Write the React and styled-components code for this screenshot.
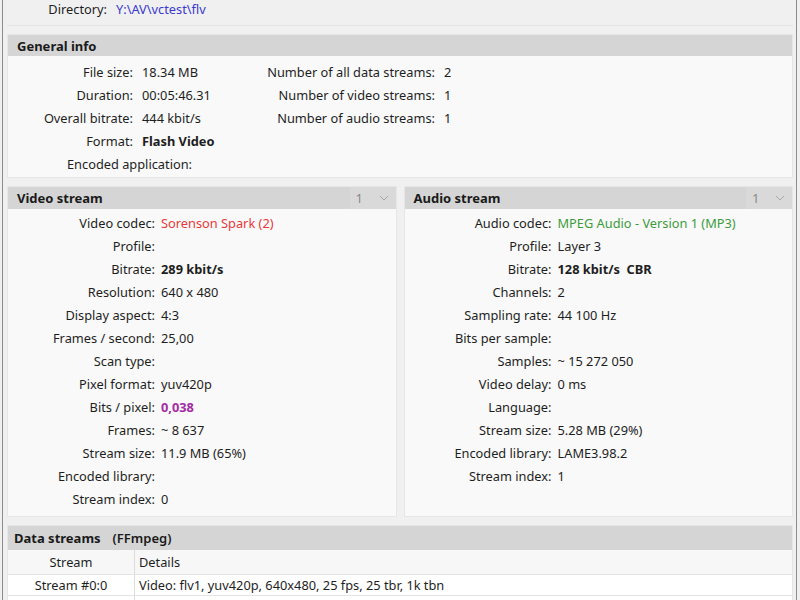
import React from "react";
import styled, { createGlobalStyle } from "styled-components";

const GlobalStyle = createGlobalStyle`
  html, body {
    margin: 0;
    padding: 0;
  }
  body {
    font-family: "Noto Sans", "Open Sans", sans-serif;
    font-size: 12.8px;
    color: #1e1e1e;
  }
`;

const Screen = styled.div`
  width: 800px;
  height: 600px;
  overflow: hidden;
  background: #f0f0f0;
`;

const Frame = styled.div`
  margin: 0 3px 0 2px;
  height: 600px;
  border-left: 1px solid #8c8c8c;
  border-right: 1px solid #8c8c8c;
  padding: 0 3px 0 4px;
  display: flex;
  flex-direction: column;
  gap: 8px;
`;

const DirRow = styled.div`
  display: grid;
  grid-template-columns: 100px 1fr;
  column-gap: 9px;
  height: 25px;
  line-height: 18px;
  border-bottom: 1px solid #e4e4e4;
`;

const Label = styled.span`
  text-align: right;
  white-space: nowrap;
`;

const WideLabel = styled.span`
  grid-column: 1 / 3;
  padding-left: 59px;
  white-space: nowrap;
`;

const Value = styled.span`
  white-space: pre;
  color: ${(p) => p.$color || "#1e1e1e"};
  font-weight: ${(p) => (p.$bold ? 700 : 400)};
`;

const Panel = styled.section`
  background: #f9f9f9;
  border: 1px solid #e6e6e6;
  display: flex;
  flex-direction: column;
  flex: ${(p) => (p.$grow ? 1 : "none")};
  min-height: 0;
`;

const PanelHeader = styled.header`
  height: ${(p) => p.$h || "21px"};
  flex: none;
  background: #d5d5d5;
  display: flex;
  align-items: center;
  padding-left: ${(p) => p.$indent || "9px"};
  font-weight: 700;
  font-size: 13px;
  color: #1a1a1a;
`;

const HeaderTitle = styled.span`
  flex: 1;
`;

const HeaderNote = styled.span`
  margin-left: 12px;
  font-weight: 600;
`;

const Combo = styled.div`
  width: 46px;
  height: 100%;
  background: #d9d9d9;
  display: flex;
  align-items: center;
  justify-content: space-between;
  padding: 0 7px 0 6px;
  box-sizing: border-box;
  font-weight: 400;
  color: #8a8a8a;
`;

const InfoGrid = styled.div`
  display: grid;
  grid-template-columns: ${(p) => p.$cols};
  column-gap: ${(p) => p.$gap || "6px"};
  grid-auto-rows: 23px;
  align-items: center;
  padding: ${(p) => p.$pad || "3px 0"};
`;

const StreamRow = styled.div`
  display: flex;
  gap: 7px;
  height: 331px;
  flex: none;
`;

const Table = styled.div`
  display: grid;
  grid-template-columns: 126px 1fr;
  grid-template-rows: 25px 21px 21px;
  background: #f7f7f7;
`;

const Cell = styled.div`
  display: flex;
  align-items: center;
  padding-left: ${(p) => (p.$center ? "0" : "4px")};
  justify-content: ${(p) => (p.$center ? "center" : "flex-start")};
  border-left: ${(p) => (p.$first ? "none" : "1px solid #dcdcdc")};
  background: ${(p) => (p.$body ? "#ffffff" : "transparent")};
  border-bottom: 1px solid #e4e4e4;
  white-space: nowrap;
`;

const Chevron = () => (
  <svg width="10" height="6" viewBox="0 0 10 6">
    <path d="M1 1 L5 5 L9 1" fill="none" stroke="#a8a8a8" strokeWidth="1" />
  </svg>
);

const general = [
  ["File size:", "18.34 MB", "Number of all data streams:", "2"],
  ["Duration:", "00:05:46.31", "Number of video streams:", "1"],
  ["Overall bitrate:", "444 kbit/s", "Number of audio streams:", "1"],
  ["Format:", { text: "Flash Video", bold: true }, "", ""],
];

const video = [
  ["Video codec:", { text: "Sorenson Spark (2)", color: "#e8393a" }],
  ["Profile:", ""],
  ["Bitrate:", { text: "289 kbit/s", bold: true }],
  ["Resolution:", "640 x 480"],
  ["Display aspect:", "4:3"],
  ["Frames / second:", "25,00"],
  ["Scan type:", ""],
  ["Pixel format:", "yuv420p"],
  ["Bits / pixel:", { text: "0,038", bold: true, color: "#a42ca4" }],
  ["Frames:", "~ 8 637"],
  ["Stream size:", "11.9 MB (65%)"],
  ["Encoded library:", ""],
  ["Stream index:", "0"],
];

const audio = [
  ["Audio codec:", { text: "MPEG Audio - Version 1 (MP3)", color: "#3c9c3c" }],
  ["Profile:", "Layer 3"],
  ["Bitrate:", { text: "128 kbit/s  CBR", bold: true }],
  ["Channels:", "2"],
  ["Sampling rate:", "44 100 Hz"],
  ["Bits per sample:", ""],
  ["Samples:", "~ 15 272 050"],
  ["Video delay:", "0 ms"],
  ["Language:", ""],
  ["Stream size:", "5.28 MB (29%)"],
  ["Encoded library:", "LAME3.98.2"],
  ["Stream index:", "1"],
];

function renderValue(v, key) {
  if (typeof v === "string") return <Value key={key}>{v}</Value>;
  return (
    <Value key={key} $bold={v.bold} $color={v.color}>
      {v.text}
    </Value>
  );
}

function StreamPanel({ title, rows, labelWidth }) {
  return (
    <Panel $grow>
      <PanelHeader $h="22px">
        <HeaderTitle>{title}</HeaderTitle>
        <Combo>
          <span>1</span>
          <Chevron />
        </Combo>
      </PanelHeader>
      <InfoGrid $cols={`${labelWidth}px 1fr`} $pad="2px 0">
        {rows.map(([l, v], i) => (
          <React.Fragment key={i}>
            <Label>{l}</Label>
            {renderValue(v, "v" + i)}
          </React.Fragment>
        ))}
      </InfoGrid>
    </Panel>
  );
}

export default function App() {
  return (
    <>
      <GlobalStyle />
      <Screen>
        <Frame>
          <DirRow>
            <Label>Directory:</Label>
            <Value $color="#3a3ad0">Y:\AV\vctest\flv</Value>
          </DirRow>

          <Panel>
            <PanelHeader>
              <HeaderTitle>General info</HeaderTitle>
            </PanelHeader>
            <InfoGrid $cols="125px 106px 178px 1fr" $gap="9px" $pad="4px 0 2px">
              {general.map(([l1, v1, l2, v2], i) => (
                <React.Fragment key={i}>
                  <Label>{l1}</Label>
                  {renderValue(v1, "a" + i)}
                  <Label>{l2}</Label>
                  {renderValue(v2, "b" + i)}
                </React.Fragment>
              ))}
              <WideLabel>Encoded application:</WideLabel>
            </InfoGrid>
          </Panel>

          <StreamRow>
            <StreamPanel title="Video stream" rows={video} labelWidth={147} />
            <StreamPanel title="Audio stream" rows={audio} labelWidth={147} />
          </StreamRow>

          <Panel $grow>
            <PanelHeader $h="24px" $indent="6px">
              <span>Data streams</span>
              <HeaderNote>(FFmpeg)</HeaderNote>
            </PanelHeader>
            <Table>
              <Cell $first $center>Stream</Cell>
              <Cell>Details</Cell>
              <Cell $first $center $body>Stream #0:0</Cell>
              <Cell $body>Video: flv1, yuv420p, 640x480, 25 fps, 25 tbr, 1k tbn</Cell>
              <Cell $first $center $body />
              <Cell $body />
            </Table>
          </Panel>
        </Frame>
      </Screen>
    </>
  );
}
